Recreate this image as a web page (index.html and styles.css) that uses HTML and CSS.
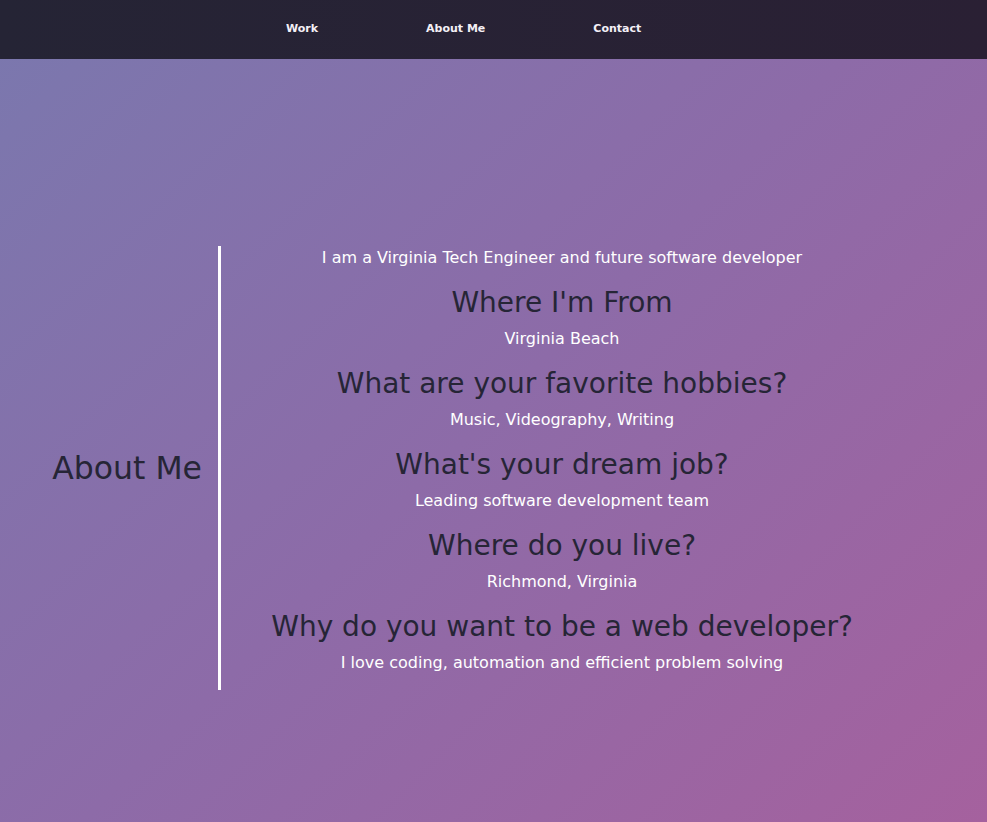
FILE: index.html
```html
<!DOCTYPE html>
<html>
<head>
<meta charset="utf-8">
<link rel="stylesheet" href="styles.css">
</head>
<body>
<nav class="nav">
  <a class="nav-link" href="#">Work</a>
  <a class="nav-link" href="#">About Me</a>
  <a class="nav-link" href="#">Contact</a>
</nav>
<main class="main">
  <section class="about">
    <h1 class="about-title">About Me</h1>
    <div class="content">
      <p class="intro">I am a Virginia Tech Engineer and future software developer</p>
      <h2 class="q">Where I'm From</h2>
      <p class="a">Virginia Beach</p>
      <h2 class="q">What are your favorite hobbies?</h2>
      <p class="a">Music, Videography, Writing</p>
      <h2 class="q">What's your dream job?</h2>
      <p class="a">Leading software development team</p>
      <h2 class="q">Where do you live?</h2>
      <p class="a">Richmond, Virginia</p>
      <h2 class="q">Why do you want to be a web developer?</h2>
      <p class="a">I love coding, automation and efficient problem solving</p>
    </div>
  </section>
</main>
</body>
</html>
```
FILE: styles.css
```css
* { box-sizing: border-box; }
html, body { margin: 0; padding: 0; }
body {
  width: 987px;
  height: 822px;
  overflow: hidden;
  font-family: "DejaVu Sans", Verdana, sans-serif;
  background: linear-gradient(135deg, #7a78ae 0%, #8d6ba8 50%, #a5619e 100%);
}
.nav {
  height: 59px;
  background: linear-gradient(90deg, #252435 0%, #2a2034 100%);
  display: flex;
  align-items: center;
  gap: 108px;
  padding-left: 286px;
  padding-bottom: 2px;
}
.nav-link {
  color: #f4f0f6;
  font-weight: bold;
  font-size: 11px;
  text-decoration: none;
}
.main {
  padding-top: 187px;
}
.about {
  display: flex;
  align-items: center;
}
.about-title {
  width: 218px;
  margin: 0;
  padding-right: 16px;
  text-align: right;
  font-weight: normal;
  font-size: 31.5px;
  color: #262536;
}
.content {
  border-left: 3px solid #ffffff;
  width: 685px;
  text-align: center;
  padding: 0 0 15px;
}
.intro, .a {
  margin: 0;
  color: #ffffff;
  font-size: 16px;
  line-height: 24px;
}
.intro { margin-bottom: 15px; }
.q {
  margin: 0 0 6px;
  font-weight: normal;
  font-size: 28px;
  line-height: 36px;
  color: #262536;
}
.a { margin-bottom: 15px; }
.a:last-child { margin-bottom: 0; }
```
